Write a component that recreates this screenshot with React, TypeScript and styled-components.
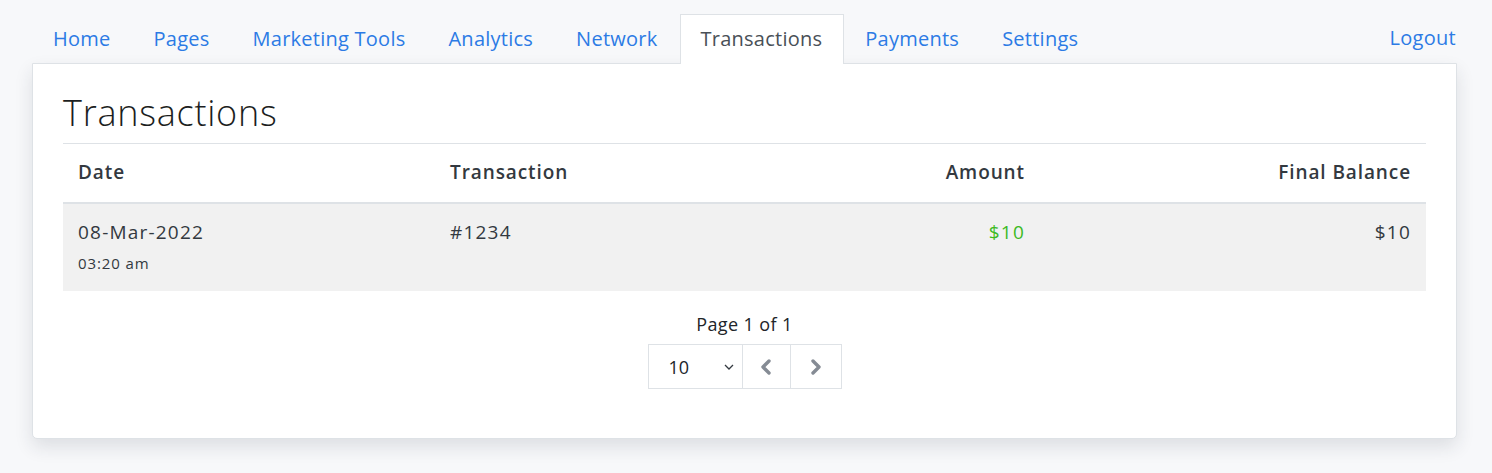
import React from "react";
import styled, { createGlobalStyle } from "styled-components";

const GlobalStyle = createGlobalStyle`
  html, body {
    margin: 0;
    padding: 0;
    background: #f7f8fa;
    font-family: "Open Sans", "Noto Sans", sans-serif;
    color: #212529;
  }
  * { box-sizing: border-box; }
`;

const Page = styled.div`
  padding: 14px 35px 34px 32px;
`;

const TopBar = styled.div`
  display: flex;
  align-items: flex-end;
  justify-content: space-between;
`;

const Tabs = styled.nav`
  display: flex;
  align-items: flex-end;
`;

const Tab = styled.a<{ $active?: boolean }>`
  position: relative;
  z-index: 1;
  display: block;
  padding: 9px 21px 10px 20px;
  margin-bottom: -1px;
  font-size: 20px;
  line-height: 30px;
  letter-spacing: 0.25px;
  text-decoration: none;
  cursor: pointer;
  border: 1px solid ${(p) => (p.$active ? "#dee2e6" : "transparent")};
  border-bottom: 0;
  background: ${(p) => (p.$active ? "#ffffff" : "transparent")};
  color: ${(p) => (p.$active ? "#495057" : "#2c7be5")};
`;

const Logout = styled.a`
  display: block;
  padding: 9px 1px 10px 0;
  font-size: 20px;
  line-height: 30px;
  letter-spacing: 0.3px;
  color: #2c7be5;
  text-decoration: none;
  cursor: pointer;
`;

const Card = styled.section`
  background: #ffffff;
  border: 1px solid #dee2e6;
  border-radius: 0 0 5px 5px;
  padding: 28px 30px 49px;
  box-shadow: 0 8px 18px rgba(30, 40, 60, 0.12);
`;

const Title = styled.h1`
  margin: 0;
  padding: 1px 0 10px;
  font-size: 36px;
  line-height: 40px;
  font-weight: 300;
  letter-spacing: 0.75px;
  color: #1c1e21;
  border-bottom: 1px solid #dee2e6;
`;

const Table = styled.div`
  display: grid;
  grid-template-columns: 372px 1fr 1fr 386px;
`;

const HeadCell = styled.div<{ $right?: boolean }>`
  padding: 15px 15px 16px;
  font-size: 19px;
  line-height: 27px;
  font-weight: 600;
  letter-spacing: 0.9px;
  color: #333940;
  text-align: ${(p) => (p.$right ? "right" : "left")};
  border-bottom: 2px solid #dee2e6;
`;

const Cell = styled.div<{ $right?: boolean; $color?: string }>`
  padding: 15px 15px 16px;
  background: #f1f1f1;
  font-size: 19px;
  line-height: 27px;
  letter-spacing: 1.2px;
  color: ${(p) => p.$color || "#333940"};
  text-align: ${(p) => (p.$right ? "right" : "left")};
`;

const SubText = styled.div`
  margin-top: 5px;
  font-size: 15px;
  line-height: 24px;
  letter-spacing: 0.9px;
  color: #333940;
`;

const Pager = styled.div`
  display: flex;
  flex-direction: column;
  align-items: center;
  padding-top: 20px;
`;

const PageLabel = styled.div`
  font-size: 18px;
  line-height: 27px;
  letter-spacing: 0.4px;
  color: #212529;
  margin-bottom: 6px;
`;

const Controls = styled.div`
  display: flex;
  height: 45px;
  border: 1px solid #dee2e6;
`;

const PerPage = styled.div`
  display: flex;
  align-items: center;
  justify-content: space-between;
  width: 94px;
  padding: 0 8px 0 20px;
  font-size: 18px;
  color: #212529;
  border-right: 1px solid #dee2e6;
`;

const NavButton = styled.button<{ $w: number; $last?: boolean }>`
  display: flex;
  align-items: center;
  justify-content: center;
  width: ${(p) => p.$w}px;
  padding: 0;
  border: 0;
  border-right: ${(p) => (p.$last ? "0" : "1px solid #dee2e6")};
  background: transparent;
  cursor: pointer;
`;

const ChevronDown = () => (
  <svg width="10" height="6" viewBox="0 0 10 6" fill="none">
    <path d="M1 1l4 4 4-4" stroke="#343a40" strokeWidth="1.3" />
  </svg>
);

const Chevron = ({ dir }: { dir: "left" | "right" }) => (
  <svg width="12" height="16" viewBox="0 0 12 16" fill="none">
    <path
      d={dir === "left" ? "M9 2L3 8l6 6" : "M3 2l6 6-6 6"}
      stroke="#858b94"
      strokeWidth="3.4"
      strokeLinecap="round"
      strokeLinejoin="round"
    />
  </svg>
);

const tabs = [
  "Home",
  "Pages",
  "Marketing Tools",
  "Analytics",
  "Network",
  "Transactions",
  "Payments",
  "Settings",
];

export default function App() {
  return (
    <>
      <GlobalStyle />
      <Page>
        <TopBar>
          <Tabs>
            {tabs.map((t) => (
              <Tab key={t} $active={t === "Transactions"}>
                {t}
              </Tab>
            ))}
          </Tabs>
          <Logout>Logout</Logout>
        </TopBar>
        <Card>
          <Title>Transactions</Title>
          <Table>
            <HeadCell>Date</HeadCell>
            <HeadCell>Transaction</HeadCell>
            <HeadCell $right>Amount</HeadCell>
            <HeadCell $right>Final Balance</HeadCell>
            <Cell>
              08-Mar-2022
              <SubText>03:20 am</SubText>
            </Cell>
            <Cell>#1234</Cell>
            <Cell $right $color="#3dba1f">
              $10
            </Cell>
            <Cell $right>$10</Cell>
          </Table>
          <Pager>
            <PageLabel>Page 1 of 1</PageLabel>
            <Controls>
              <PerPage>
                10
                <ChevronDown />
              </PerPage>
              <NavButton $w={48} aria-label="Previous page">
                <Chevron dir="left" />
              </NavButton>
              <NavButton $w={50} $last aria-label="Next page">
                <Chevron dir="right" />
              </NavButton>
            </Controls>
          </Pager>
        </Card>
      </Page>
    </>
  );
}
